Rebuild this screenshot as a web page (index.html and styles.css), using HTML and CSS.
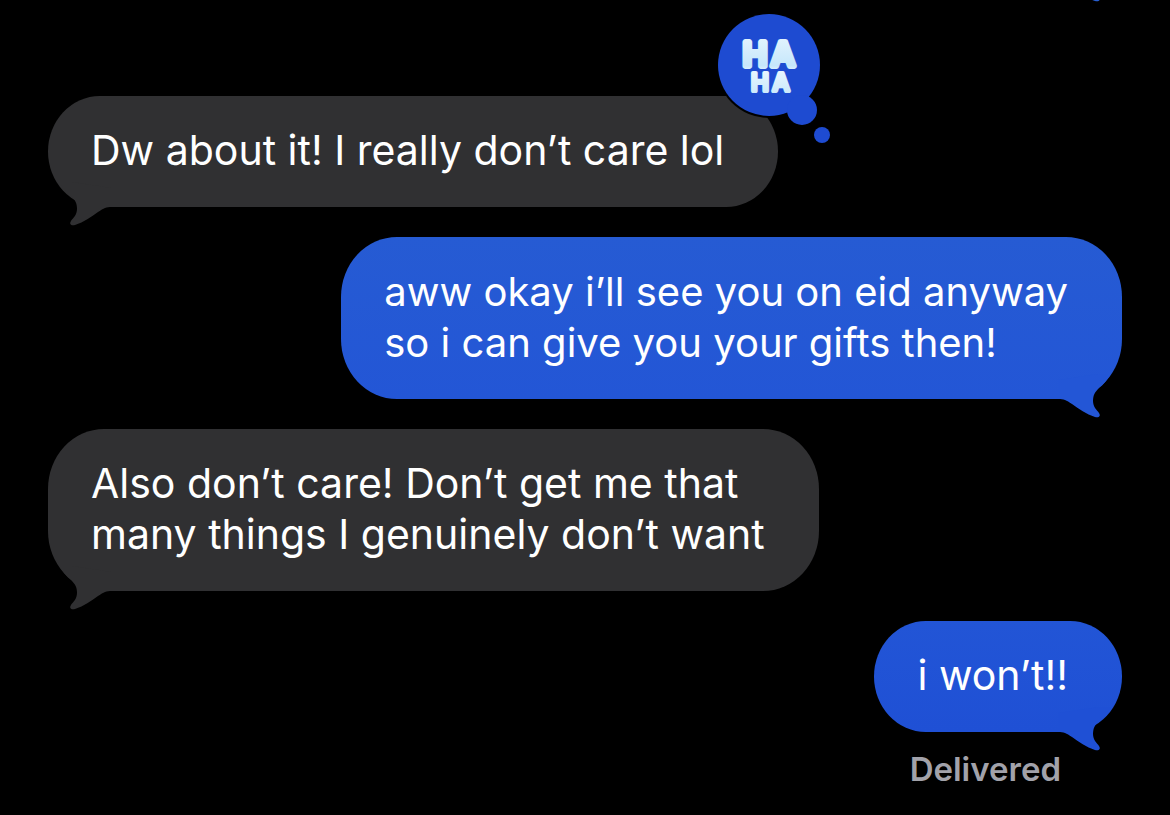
FILE: index.html
```html
<!DOCTYPE html>
<html lang="en">
<head>
  <meta charset="UTF-8">
  <meta name="viewport" content="width=device-width, initial-scale=1.0">
  <title>Messages</title>
  <link rel="stylesheet" href="styles.css">
</head>
<body>
  <!-- shared bubble tail, drawn for the left side -->
  <svg class="defs" aria-hidden="true">
    <symbol id="tail" viewBox="0 0 54 48">
      <path d="M11 4 C15 10 19 15 23 18 C27 22 29 25 29 31 C29 37 25 40 23 43 C21 46 23 48 27 47 C36 44 43 39 50 34 C56 30 58 29 64 29 L64 10 L24 4 Z"/>
    </symbol>
  </svg>

  <main class="thread">
    <svg class="tail tail-previous" aria-hidden="true"><use href="#tail"/></svg>

    <div class="message received">
      <p>Dw about it! I really don’t care lol</p>
      <svg class="tail" aria-hidden="true"><use href="#tail"/></svg>
      <svg class="reaction" viewBox="0 0 116 136" role="img" aria-label="Haha">
        <defs>
          <linearGradient id="puff" x1="0" y1="0" x2="0" y2="1">
            <stop offset="0" stop-color="#e6f5fe"/>
            <stop offset="0.5" stop-color="#c6e7fb"/>
            <stop offset="0.6" stop-color="#e6f5fe"/>
            <stop offset="1" stop-color="#c6e7fb"/>
          </linearGradient>
        </defs>
        <circle class="ring" cx="54" cy="54" r="53"/>
        <circle cx="54" cy="54" r="51"/>
        <circle cx="87" cy="99" r="15"/>
        <circle cx="107" cy="124" r="8"/>
        <text class="ha"><tspan class="ha-big" x="40 68" y="55">HA</tspan><tspan class="ha-small" x="45 66" y="80">HA</tspan></text>
      </svg>
    </div>

    <div class="message sent">
      <p>aww okay i’ll see you on eid anyway<br>so i can give you your gifts then!</p>
      <svg class="tail" aria-hidden="true"><use href="#tail"/></svg>
    </div>

    <div class="message received">
      <p>Also don’t care! Don’t get me that<br>many things I genuinely don’t want</p>
      <svg class="tail" aria-hidden="true"><use href="#tail"/></svg>
    </div>

    <div class="message sent last">
      <p>i won’t!!</p>
      <svg class="tail" aria-hidden="true"><use href="#tail"/></svg>
    </div>

    <div class="status">Delivered</div>
  </main>
</body>
</html>
```

FILE: styles.css
```css
* {
  box-sizing: border-box;
}

body {
  margin: 0;
  background-color: #000;
  color: #fff;
  font-family: Inter, "Liberation Sans", sans-serif;
}

.defs {
  position: absolute;
  width: 0;
  height: 0;
}

.thread {
  position: relative;
  display: flex;
  flex-direction: column;
  gap: 30px;
  padding: 96px 48px 24px;
}

/* bubbles */
.message {
  position: relative;
  padding: 29px 54px 31px 43px;
  border-radius: 56px / 60px;
  font-size: 41px;
  line-height: 51px;
}

.message p {
  margin: 0;
}

.received {
  align-self: flex-start;
  background-color: #303032;
  fill: #303032;
}

.sent {
  align-self: flex-end;
  background: linear-gradient(#265bd3, #2356d6);
  fill: #2356d6;
  font-size: 40px;
}

.sent.last {
  background: linear-gradient(#2255d6, #1f50d5);
  fill: #1f50d5;
  font-size: 41px;
}

.tail {
  position: absolute;
  left: 0;
  bottom: -19px;
  width: 54px;
  height: 48px;
  overflow: visible;
}

#tail {
  overflow: visible;
}

.sent .tail,
.tail-previous {
  left: auto;
  right: 0;
  transform: scaleX(-1);
}

/* tip of the message that is scrolled out of view */
.tail-previous {
  top: -46px;
  right: 48px;
  fill: #285fd2;
}

/* tapback */
.reaction {
  position: absolute;
  top: -85px;
  right: -53px;
  width: 116px;
  height: 136px;
  fill: #1e4bd1;
}

.ring {
  fill: #000;
}

.ha {
  font-weight: 500;
  text-anchor: middle;
  fill: #fff;
  stroke: url(#puff);
  stroke-linejoin: round;
}

.ha-big {
  font-size: 33px;
  stroke-width: 6px;
}

.ha-small {
  font-size: 24px;
  stroke-width: 4px;
}

.status {
  align-self: flex-end;
  margin-top: -13px;
  margin-right: 61px;
  color: #a2a2aa;
  font-size: 33px;
  font-weight: 600;
  line-height: 40px;
}
```
